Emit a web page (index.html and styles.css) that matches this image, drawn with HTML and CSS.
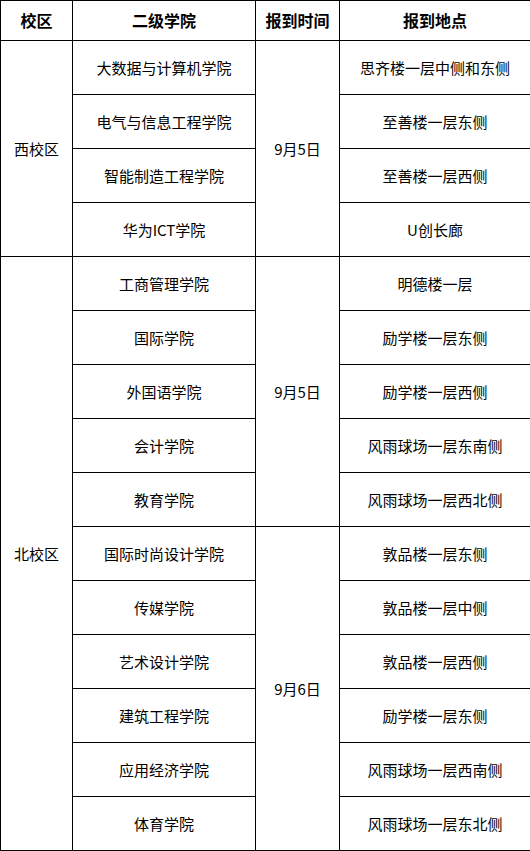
FILE: index.html
```html
<!DOCTYPE html>
<html lang="zh-CN">
<head>
<meta charset="utf-8">
<title>报到安排</title>
<link rel="stylesheet" href="styles.css">
</head>
<body>
<table class="schedule">
  <colgroup>
    <col class="c1"><col class="c2"><col class="c3"><col class="c4">
  </colgroup>
  <thead>
    <tr><th>校区</th><th>二级学院</th><th>报到时间</th><th>报到地点</th></tr>
  </thead>
  <tbody>
    <tr><td rowspan="4">西校区</td><td>大数据与计算机学院</td><td rowspan="4">9月5日</td><td>思齐楼一层中侧和东侧</td></tr>
    <tr><td>电气与信息工程学院</td><td>至善楼一层东侧</td></tr>
    <tr><td>智能制造工程学院</td><td>至善楼一层西侧</td></tr>
    <tr><td>华为ICT学院</td><td>U创长廊</td></tr>
    <tr><td rowspan="11">北校区</td><td>工商管理学院</td><td rowspan="5">9月5日</td><td>明德楼一层</td></tr>
    <tr><td>国际学院</td><td>励学楼一层东侧</td></tr>
    <tr><td>外国语学院</td><td>励学楼一层西侧</td></tr>
    <tr><td>会计学院</td><td>风雨球场一层东南侧</td></tr>
    <tr><td>教育学院</td><td>风雨球场一层西北侧</td></tr>
    <tr><td>国际时尚设计学院</td><td rowspan="6">9月6日</td><td>敦品楼一层东侧</td></tr>
    <tr><td>传媒学院</td><td>敦品楼一层中侧</td></tr>
    <tr><td>艺术设计学院</td><td>敦品楼一层西侧</td></tr>
    <tr><td>建筑工程学院</td><td>励学楼一层东侧</td></tr>
    <tr><td>应用经济学院</td><td>风雨球场一层西南侧</td></tr>
    <tr><td>体育学院</td><td>风雨球场一层东北侧</td></tr>
  </tbody>
</table>
</body>
</html>
```

FILE: styles.css
```css
html, body {
  margin: 0;
  padding: 0;
  background: #fff;
}
.schedule {
  width: 530px;
  table-layout: fixed;
  border-collapse: collapse;
  font-family: "Noto Sans CJK SC", "DejaVu Sans", sans-serif;
  color: #000;
}
.c1 { width: 72px; }
.c2 { width: 183px; }
.c3 { width: 84px; }
.c4 { width: 191px; }
.schedule th,
.schedule td {
  border: 1px solid #000;
  padding: 0;
  text-align: center;
  vertical-align: middle;
  line-height: 1.2;
}
.schedule th {
  height: 39px;
  font-size: 16px;
  font-weight: bold;
}
.schedule td {
  height: 53px;
  font-size: 15px;
  font-weight: normal;
}
```
